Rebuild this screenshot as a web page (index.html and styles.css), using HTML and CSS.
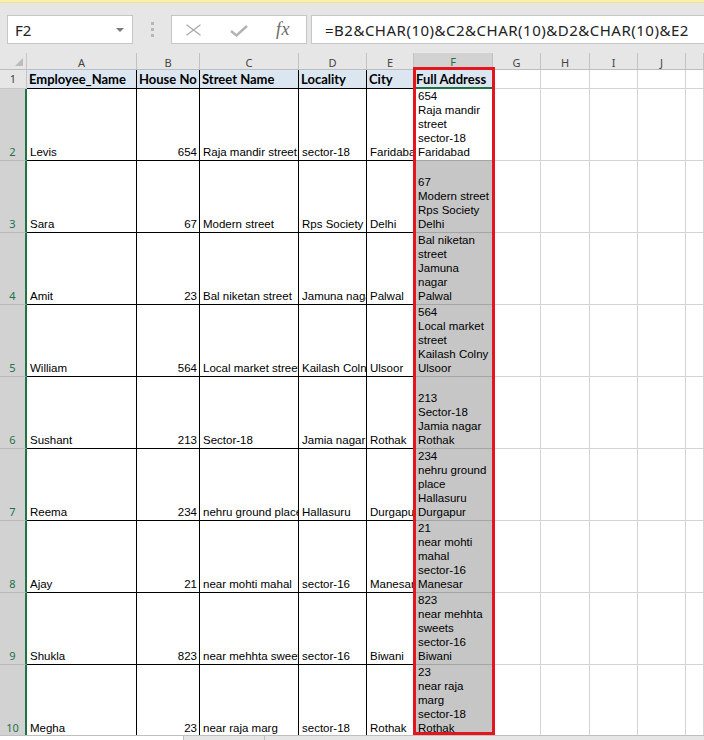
FILE: index.html
```html
<!DOCTYPE html>
<html>
<head>
<meta charset="utf-8">
<link rel="stylesheet" href="styles.css">
</head>
<body>
<div class="app">
  <div class="topline"></div>
  <div class="fbar">
    <div class="namebox"><span>F2</span><span class="caret"></span></div>
    <div class="grip"><i></i><i></i><i></i></div>
    <div class="fxbox">
      <svg class="ico-x" width="17" height="12" viewBox="0 0 17 12"><path d="M1.5 0.8 L15.5 11.2 M15.5 0.8 L1.5 11.2" stroke="#a9a9a9" stroke-width="1.3" fill="none"/></svg>
      <svg class="ico-ok" width="18" height="12" viewBox="0 0 18 12"><path d="M1 6 L6.5 10.5 L17 1" stroke="#b3b3b3" stroke-width="2.4" fill="none"/></svg>
      <span class="fx">fx</span>
    </div>
    <div class="formula">=B2&amp;CHAR(10)&amp;C2&amp;CHAR(10)&amp;D2&amp;CHAR(10)&amp;E2</div>
  </div>
  <div class="sheet">
    <div class="grid">
      <!-- column headers -->
      <div class="corner"><svg width="8" height="8" viewBox="0 0 8 8"><path d="M8 0 L8 8 L0 8 Z" fill="#bcbcbc"/></svg></div>
      <div class="ch">A</div><div class="ch">B</div><div class="ch">C</div><div class="ch">D</div><div class="ch">E</div>
      <div class="ch sel">F</div><div class="ch">G</div><div class="ch">H</div><div class="ch">I</div><div class="ch">J</div><div class="ch"></div>

      <!-- row 1 -->
      <div class="rh r1">1</div>
      <div class="c hd">Employee_Name</div><div class="c hd">House No</div><div class="c hd">Street Name</div><div class="c hd">Locality</div><div class="c hd">City</div>
      <div class="c hd fh">Full Address</div>
      <div class="e"></div><div class="e"></div><div class="e"></div><div class="e"></div><div class="e"></div>

      <!-- row 2 -->
      <div class="rh sel">2</div>
      <div class="c">Levis</div><div class="c n">654</div><div class="c">Raja mandir street</div><div class="c">sector-18</div><div class="c">Faridabad</div>
      <div class="c f act"><span>654</span><span>Raja mandir</span><span>street</span><span>sector-18</span><span>Faridabad</span></div>
      <div class="e"></div><div class="e"></div><div class="e"></div><div class="e"></div><div class="e"></div>

      <!-- row 3 -->
      <div class="rh sel">3</div>
      <div class="c">Sara</div><div class="c n">67</div><div class="c">Modern street</div><div class="c">Rps Society</div><div class="c">Delhi</div>
      <div class="c f"><span>67</span><span>Modern street</span><span>Rps Society</span><span>Delhi</span></div>
      <div class="e"></div><div class="e"></div><div class="e"></div><div class="e"></div><div class="e"></div>

      <!-- row 4 -->
      <div class="rh sel">4</div>
      <div class="c">Amit</div><div class="c n">23</div><div class="c">Bal niketan street</div><div class="c">Jamuna nagar</div><div class="c">Palwal</div>
      <div class="c f"><span>Bal niketan</span><span>street</span><span>Jamuna</span><span>nagar</span><span>Palwal</span></div>
      <div class="e"></div><div class="e"></div><div class="e"></div><div class="e"></div><div class="e"></div>

      <!-- row 5 -->
      <div class="rh sel">5</div>
      <div class="c">William</div><div class="c n">564</div><div class="c">Local market street</div><div class="c">Kailash Colny</div><div class="c">Ulsoor</div>
      <div class="c f"><span>564</span><span>Local market</span><span>street</span><span>Kailash Colny</span><span>Ulsoor</span></div>
      <div class="e"></div><div class="e"></div><div class="e"></div><div class="e"></div><div class="e"></div>

      <!-- row 6 -->
      <div class="rh sel">6</div>
      <div class="c">Sushant</div><div class="c n">213</div><div class="c">Sector-18</div><div class="c">Jamia nagar</div><div class="c">Rothak</div>
      <div class="c f"><span>213</span><span>Sector-18</span><span>Jamia nagar</span><span>Rothak</span></div>
      <div class="e"></div><div class="e"></div><div class="e"></div><div class="e"></div><div class="e"></div>

      <!-- row 7 -->
      <div class="rh sel">7</div>
      <div class="c">Reema</div><div class="c n">234</div><div class="c">nehru ground place</div><div class="c">Hallasuru</div><div class="c">Durgapur</div>
      <div class="c f"><span>234</span><span>nehru ground</span><span>place</span><span>Hallasuru</span><span>Durgapur</span></div>
      <div class="e"></div><div class="e"></div><div class="e"></div><div class="e"></div><div class="e"></div>

      <!-- row 8 -->
      <div class="rh sel">8</div>
      <div class="c">Ajay</div><div class="c n">21</div><div class="c">near mohti mahal</div><div class="c">sector-16</div><div class="c">Manesar</div>
      <div class="c f"><span>21</span><span>near mohti</span><span>mahal</span><span>sector-16</span><span>Manesar</span></div>
      <div class="e"></div><div class="e"></div><div class="e"></div><div class="e"></div><div class="e"></div>

      <!-- row 9 -->
      <div class="rh sel">9</div>
      <div class="c">Shukla</div><div class="c n">823</div><div class="c">near mehhta sweets</div><div class="c">sector-16</div><div class="c">Biwani</div>
      <div class="c f"><span>823</span><span>near mehhta</span><span>sweets</span><span>sector-16</span><span>Biwani</span></div>
      <div class="e"></div><div class="e"></div><div class="e"></div><div class="e"></div><div class="e"></div>

      <!-- row 10 -->
      <div class="rh sel">10</div>
      <div class="c">Megha</div><div class="c n">23</div><div class="c">near raja marg</div><div class="c">sector-18</div><div class="c">Rothak</div>
      <div class="c f"><span>23</span><span>near raja</span><span>marg</span><span>sector-18</span><span>Rothak</span></div>
      <div class="e"></div><div class="e"></div><div class="e"></div><div class="e"></div><div class="e"></div>
    </div>
    <div class="selbox"></div>
  </div>
  <div class="tabs"><div class="tabw"></div><div class="tabg"></div></div>
</div>
</body>
</html>
```
FILE: styles.css
```css
html, body {
  margin: 0;
  padding: 0;
}
body {
  width: 704px;
  height: 740px;
  overflow: hidden;
  background: #e6e6e6;
}
.app {
  display: flex;
  flex-direction: column;
  height: 740px;
}
.topline {
  height: 2px;
  background: #f7f0a6;
  border-bottom: 1px solid #ece39a;
}
.fbar {
  display: flex;
  height: 29px;
  padding: 12px 0 9px 7px;
}
.namebox {
  width: 126px;
  box-sizing: border-box;
  border: 1px solid #c6c6c6;
  background: #fff;
  display: flex;
  align-items: center;
  justify-content: space-between;
  padding: 0 8px 0 7px;
  font: 15px "Noto Sans", "Open Sans", sans-serif;
  color: #222;
}
.caret {
  width: 0;
  height: 0;
  border-left: 4px solid transparent;
  border-right: 4px solid transparent;
  border-top: 4px solid #7a7a7a;
}
.grip {
  width: 38px;
  display: flex;
  flex-direction: column;
  align-items: center;
  justify-content: center;
  gap: 3px;
}
.grip i {
  display: block;
  width: 3px;
  height: 3px;
  background: #b7b7b7;
}
.fxbox {
  width: 136px;
  box-sizing: border-box;
  border: 1px solid #c6c6c6;
  background: #fff;
  display: flex;
  align-items: center;
  padding-left: 13px;
}
.ico-x {
  margin-top: 1px;
}
.ico-ok {
  margin-left: 28px;
  margin-top: 2px;
}
.fx {
  margin-left: 28px;
  font: italic 18px "Liberation Serif", serif;
  color: #6a6a6a;
  letter-spacing: 0.5px;
}
.formula {
  flex: 1;
  margin-left: 4px;
  border: 1px solid #c6c6c6;
  border-right: none;
  background: #fff;
  padding-left: 13px;
  display: flex;
  align-items: center;
  white-space: nowrap;
  overflow: hidden;
  font: 15px "Noto Sans", "Open Sans", sans-serif;
  letter-spacing: 0.5px;
  color: #222;
}
.sheet {
  position: relative;
  height: 682px;
  overflow: hidden;
  background: #fff;
}
.grid {
  display: grid;
  grid-template-columns: 27px 110px 63px 99px 68px 47px 79px 48px 49px 48px 48px 1fr;
  grid-template-rows: 17px 19px repeat(9, 72px);
}
.grid > div {
  box-sizing: border-box;
  min-width: 0;
}
.corner {
  background: #e6e6e6;
  border-right: 1px solid #c6c6c6;
  border-bottom: 1px solid #bdbdbd;
  display: flex;
  align-items: flex-end;
  justify-content: flex-end;
  padding: 0 3px 3px 0;
}
.ch {
  background: #e6e6e6;
  border-right: 1px solid #c2c2c2;
  border-bottom: 1px solid #bdbdbd;
  display: flex;
  align-items: center;
  justify-content: center;
  font: 11px "Noto Sans", "Open Sans", sans-serif;
  color: #444;
  padding-top: 2px;
}
.ch.sel {
  background: #d2d2d2;
  color: #217346;
  border-bottom: 2px solid #217346;
}
.rh {
  background: #e6e6e6;
  border-right: 1px solid #c6c6c6;
  border-bottom: 1px solid #c6c6c6;
  display: flex;
  align-items: flex-end;
  justify-content: center;
  font: 11px/14px "Noto Sans", "Open Sans", sans-serif;
  color: #444;
  padding-bottom: 1px;
}
.rh.r1 {
  align-items: center;
  padding-bottom: 0;
}
.rh.sel {
  background: #d2d2d2;
  color: #217346;
  border-right: 2px solid #217346;
  border-bottom-color: #b9b9b9;
}
.c {
  border-right: 1px solid #000;
  border-bottom: 1px solid #000;
  display: flex;
  flex-direction: column;
  justify-content: flex-end;
  overflow: hidden;
  white-space: nowrap;
  padding: 0 2px 1px 3px;
  font: 11.5px/14px "Liberation Sans", Arial, sans-serif;
  color: #000;
}
.c.n {
  align-items: flex-end;
}
.c.hd {
  background: #dce6f1;
  justify-content: center;
  padding: 1px 2px 0 2px;
  font: bold 13px/17px "Lato", "Liberation Sans", sans-serif;
}
.c.hd.fh {
  border-bottom: 2px solid #217346;
}
.c.f {
  background: #c6c6c6;
  border-left: 1px solid #217346;
  border-right: none;
  border-bottom: 1px solid #a4a4a4;
  padding-left: 3px;
}
.c.f.act {
  background: #fff;
}
.e {
  border-right: 1px solid #d4d4d4;
  border-bottom: 1px solid #d4d4d4;
}
.selbox {
  position: absolute;
  left: 413px;
  top: 14px;
  width: 82px;
  height: 668px;
  box-sizing: border-box;
  border: 3px solid #e3161e;
  pointer-events: none;
}
.tabs {
  flex: 1;
  display: flex;
  border-top: 1px solid #bfbfbf;
  background: #e6e6e6;
}
.tabw {
  width: 183px;
  background: #fff;
  border-right: 1px solid #bfbfbf;
}
.tabg {
  width: 80px;
  border-right: 1px solid #bfbfbf;
}
```
